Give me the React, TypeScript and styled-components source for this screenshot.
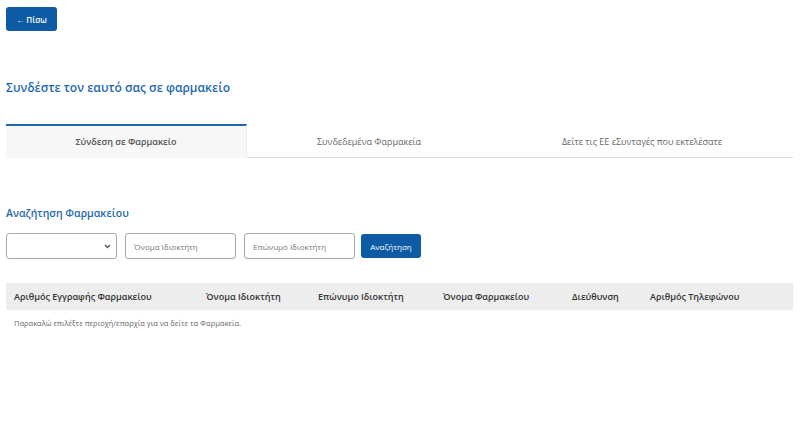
import styled, { createGlobalStyle } from "styled-components";

const GlobalStyle = createGlobalStyle`
  body {
    margin: 0;
    background: #ffffff;
    font-family: "Open Sans", "Noto Sans", sans-serif;
  }
`;

const Page = styled.div`
  padding: 7px 7px 0 6px;
  display: flex;
  flex-direction: column;
`;

const BackButton = styled.button`
  align-self: flex-start;
  width: 51px;
  height: 24px;
  background: #0d5ba5;
  color: #ffffff;
  border: none;
  border-radius: 3px;
  font-family: inherit;
  font-size: 8px;
  font-weight: 600;
  padding: 0;
  cursor: pointer;
`;

const Title = styled.h1`
  margin: 49px 0 0 0;
  font-size: 12px;
  font-weight: 600;
  color: #1f6aae;
  line-height: 16px;
`;

const Tabs = styled.div`
  display: flex;
  margin-top: 28px;
  height: 34px;
`;

const Tab = styled.div<{ $active?: boolean; $width: number }>`
  width: ${(p) => p.$width}px;
  flex: none;
  display: flex;
  align-items: center;
  justify-content: center;
  box-sizing: border-box;
  font-size: 9px;
  font-weight: ${(p) => (p.$active ? 600 : 400)};
  color: ${(p) => (p.$active ? "#555555" : "#666666")};
  background: ${(p) => (p.$active ? "#f7f7f7" : "#ffffff")};
  border-top: 2px solid ${(p) => (p.$active ? "#1f6aae" : "transparent")};
  border-bottom: 1px solid ${(p) => (p.$active ? "transparent" : "#dddddd")};
  border-right: ${(p) => (p.$active ? "1px solid #ececec" : "none")};
`;

const SectionTitle = styled.h2`
  margin: 48px 0 0 0;
  font-size: 10.5px;
  font-weight: 600;
  color: #1f6aae;
  line-height: 14px;
`;

const SearchRow = styled.div`
  display: flex;
  align-items: center;
  gap: 8px;
  margin-top: 13px;
`;

const SelectBox = styled.div`
  width: 111px;
  height: 26px;
  box-sizing: border-box;
  border: 1px solid #a8a8a8;
  border-radius: 3px;
  display: flex;
  align-items: center;
  justify-content: flex-end;
  padding-right: 5px;
`;

const Input = styled.div`
  width: 111px;
  height: 26px;
  box-sizing: border-box;
  border: 1px solid #a8a8a8;
  border-radius: 3px;
  display: flex;
  align-items: center;
  padding-left: 8px;
  font-size: 8px;
  color: #777777;
`;

const SearchButton = styled.button`
  margin-left: -2px;
  width: 60px;
  height: 24px;
  background: #0d5ba5;
  color: #ffffff;
  border: none;
  border-radius: 3px;
  font-family: inherit;
  font-size: 8px;
  padding: 0;
`;

const Table = styled.div`
  margin-top: 24px;
`;

const HeaderRow = styled.div`
  display: flex;
  align-items: center;
  height: 27px;
  background: #ededed;
  padding-left: 8px;
`;

const HeaderCell = styled.div<{ $width?: number }>`
  width: ${(p) => (p.$width ? `${p.$width}px` : "auto")};
  flex: ${(p) => (p.$width ? "none" : "1")};
  font-size: 9px;
  font-weight: 600;
  color: #333333;
  white-space: nowrap;
`;

const EmptyNote = styled.div`
  padding: 8px 0 0 8px;
  font-size: 7.5px;
  color: #666666;
`;

const columns = [
  { label: "Αριθμός Εγγραφής Φαρμακείου", width: 192 },
  { label: "Όνομα Ιδιοκτήτη", width: 112 },
  { label: "Επώνυμο Ιδιοκτήτη", width: 125 },
  { label: "Όνομα Φαρμακείου", width: 129 },
  { label: "Διεύθυνση", width: 78 },
  { label: "Αριθμός Τηλεφώνου" },
];

function Chevron() {
  return (
    <svg width="7" height="5" viewBox="0 0 7 5">
      <path d="M1 1 L3.5 3.5 L6 1" fill="none" stroke="#555" strokeWidth="1.3" />
    </svg>
  );
}

export default function App() {
  return (
    <>
      <GlobalStyle />
      <Page>
        <BackButton>← Πίσω</BackButton>
        <Title>Συνδέστε τον εαυτό σας σε φαρμακείο</Title>
        <Tabs>
          <Tab $active $width={241}>Σύνδεση σε Φαρμακείο</Tab>
          <Tab $width={244}>Συνδεδεμένα Φαρμακεία</Tab>
          <Tab $width={302}>Δείτε τις ΕΕ εΣυνταγές που εκτελέσατε</Tab>
        </Tabs>
        <SectionTitle>Αναζήτηση Φαρμακείου</SectionTitle>
        <SearchRow>
          <SelectBox>
            <Chevron />
          </SelectBox>
          <Input>Όνομα Ιδιοκτήτη</Input>
          <Input>Επώνυμο Ιδιοκτήτη</Input>
          <SearchButton>Αναζήτηση</SearchButton>
        </SearchRow>
        <Table>
          <HeaderRow>
            {columns.map((c) => (
              <HeaderCell key={c.label} $width={c.width}>
                {c.label}
              </HeaderCell>
            ))}
          </HeaderRow>
          <EmptyNote>Παρακαλώ επιλέξτε περιοχή/επαρχία για να δείτε τα Φαρμακεία.</EmptyNote>
        </Table>
      </Page>
    </>
  );
}
